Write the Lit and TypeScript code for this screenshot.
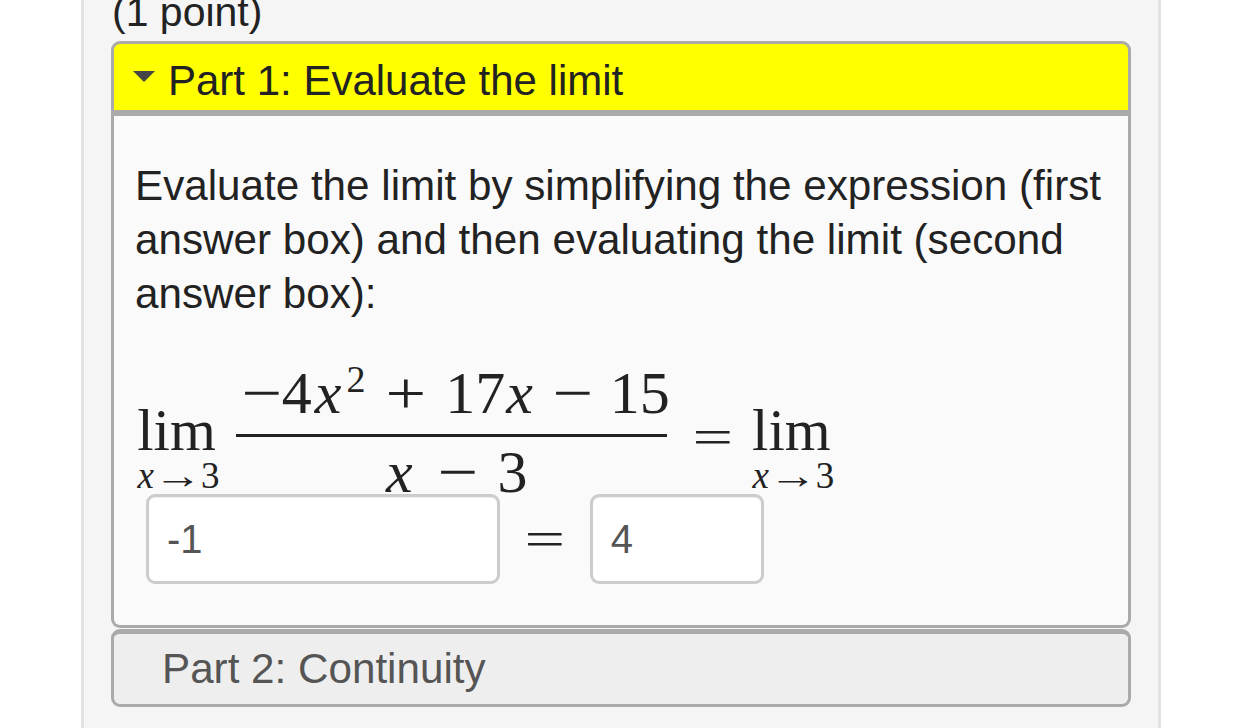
import { LitElement, html, css } from "lit";
import { customElement } from "lit/decorators.js";

@customElement("app-root")
export class AppRoot extends LitElement {
  static styles = css`
    :host { display: block; height: 728px; overflow: hidden; background: #fff; font-family: "Liberation Sans", Arial, sans-serif; color: #222; }
    .well { box-sizing: border-box; width: 1080px; height: 728px; margin-left: 81px; padding: 0 27px; background: #f5f5f5; border: solid #e3e3e3; border-width: 0 3px; display: flex; flex-direction: column; }
    .point { height: 41px; margin-left: 1px; font-size: 41px; line-height: 25px; white-space: nowrap; }
    .head1 { box-sizing: border-box; height: 75px; background: #ff0; border: 3px solid #aaa; border-bottom-width: 6px; border-radius: 9px 9px 0 0; display: flex; align-items: center; padding: 7px 0 0 17px; gap: 13px; font-size: 42px; }
    .tri { width: 0; height: 0; margin: -8px 0 0 2px; border: solid transparent; border-width: 11px 11px 0; border-top-color: #444; }
    .body1 { box-sizing: border-box; height: 512px; background: #fafafa; border: 3px solid #aaa; border-top: 0; border-radius: 0 0 9px 9px; padding: 43px 21px 0; }
    p { margin: 0; font-size: 42.2px; line-height: 54px; }
    .m1 { display: flex; align-items: flex-start; height: 134px; margin-top: 39px; font-family: "Liberation Serif", "Times New Roman", serif; color: #222; font-size: 60px; white-space: nowrap; }
    .lim { display: flex; flex-direction: column; align-items: center; width: 87px; margin-top: 40px; }
    .lim b { font-weight: 400; font-size: 59px; line-height: 61px; margin-right: 4px; }
    .sub { display: flex; align-items: center; gap: 5px; font-size: 37px; line-height: 30px; }
    .arrow { display: inline-block; transform: scaleX(1.3); }
    i { font-style: italic; }
    .op { display: inline-block; transform: scaleX(1.2); }
    .frac { display: flex; flex-direction: column; margin-left: 14px; width: 431px; }
    .num, .den { display: flex; }
    .num { height: 74px; line-height: 66px; border-bottom: 3px solid #222; padding-left: 9px; }
    .num > :nth-child(2) { margin-left: 3px; }
    .num > :nth-child(3) { margin-left: 3px; }
    .num > :nth-child(4) { margin-left: 5px; font-size: 38px; line-height: 1; }
    .num > :nth-child(5) { margin-left: 24px; }
    .num > :nth-child(6) { margin-left: 22px; }
    .num > :nth-child(7) { margin-left: 1px; }
    .num > :nth-child(8) { margin-left: 23px; }
    .num > :nth-child(9) { margin-left: 20px; }
    .den { line-height: 70px; padding-left: 150px; }
    .den > :nth-child(2) { margin-left: 28px; }
    .den > :nth-child(3) { margin-left: 23px; }
    .eq { margin: 46px 20px 0 29px; line-height: 62px; transform: scale(1.2, .85); }
    .m2 { display: flex; align-items: center; margin-left: 11px; font-family: "Liberation Serif", serif; font-size: 60px; position: relative; }
    input { box-sizing: border-box; height: 90px; border: 3px solid #ccc; border-radius: 9px; background: #fff; color: #555; font: 40px "Liberation Sans", Arial, sans-serif; padding: 0 18px; outline: 0; box-shadow: inset 0 1px 1px rgba(0,0,0,.07); }
    .a { width: 354px; }
    .b { width: 174px; }
    .eq2 { margin: 0 28px; transform: scale(1.2, .85); }
    .head2 { box-sizing: border-box; height: 78px; margin-top: 1px; background: #eee; border: 3px solid #aaa; border-top-width: 5px; border-radius: 9px; display: flex; align-items: center; padding-left: 48px; font-size: 42.2px; color: #555; }
  `;

  render() {
    const lim = html`<div class="lim"><b>lim</b><span class="sub"><i>x</i><span class="arrow">→</span><span>3</span></span></div>`;
    return html`<div class="well">
      <div class="point">(1 point)</div>
      <div class="head1"><span class="tri"></span><span>Part 1: Evaluate the limit</span></div>
      <div class="body1">
        <p>Evaluate the limit by simplifying the expression (first answer box) and then evaluating the limit (second answer box):</p>
        <div class="m1">
          ${lim}
          <div class="frac">
            <div class="num"><span class="op">−</span><span>4</span><i>x</i><span>2</span><span class="op">+</span><span>17</span><i>x</i><span class="op">−</span><span>15</span></div>
            <div class="den"><i>x</i><span class="op">−</span><span>3</span></div>
          </div>
          <span class="eq">=</span>
          ${lim}
        </div>
        <div class="m2"><input class="a" value="-1" /><span class="eq2">=</span><input class="b" value="4" /></div>
      </div>
      <div class="head2">Part 2: Continuity</div>
    </div>`;
  }
}
